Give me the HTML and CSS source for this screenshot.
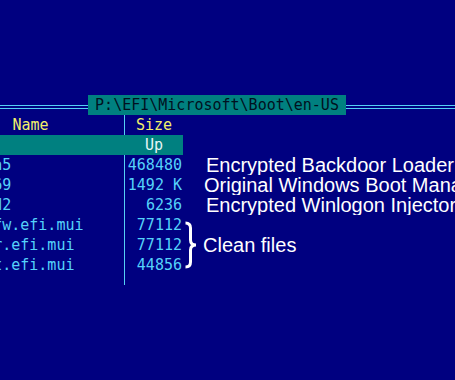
FILE: index.html
```html
<!DOCTYPE html>
<html lang="en">
  <head>
    <meta charset="UTF-8" />
    <title>Far Manager - EFI Boot</title>
    <link rel="stylesheet" href="styles.css">
  </head>
  <body>
    <div class="screen">
      <!-- panel title with double frame line -->
      <div class="titlebar">
        <div class="frame left"></div>
        <div class="path">P:\EFI\Microsoft\Boot\en-US</div>
        <div class="frame right"></div>
      </div>

      <div class="panel">
        <div class="name head">Name</div>
        <div class="size head">Size</div>
        <div class="note"></div>

        <div class="name hl"></div>
        <div class="size hl up">Up</div>
        <div class="note"></div>

        <div class="name">3f1c07a5</div>
        <div class="size">468480</div>
        <div class="note">Encrypted Backdoor Loader</div>

        <div class="name">8e4b2d69</div>
        <div class="size">1492 K</div>
        <div class="note orig">Original Windows Boot Manager</div>

        <div class="name">c05a91d2</div>
        <div class="size">6236</div>
        <div class="note">Encrypted Winlogon Injector</div>

        <div class="name">bootmgfw.efi.mui</div>
        <div class="size">77112</div>
        <div class="note clean">
          <svg class="brace" width="16" height="48" viewBox="0 0 16 48">
            <path d="M1.5 2 Q6.5 2 6.5 7 L6.5 19 Q6.5 24 12 24 Q6.5 24 6.5 29 L6.5 41 Q6.5 46 1.5 46"
                  fill="none" stroke="#fff" stroke-width="3" />
          </svg>
          <span>Clean files</span>
        </div>

        <div class="name">bootmgr.efi.mui</div>
        <div class="size">77112</div>

        <div class="name">memtest.efi.mui</div>
        <div class="size">44856</div>

        <div class="name tail"></div>
        <div class="size tail"></div>
      </div>
    </div>
  </body>
</html>
```

FILE: styles.css
```css
body {
  margin: 0;
  background-color: #000080;
  overflow: hidden;
  height: 380px;
}
.screen {
  padding-top: 95px;
  font-family: "DejaVu Sans Mono", "Liberation Mono", monospace;
  font-size: 15px;
}
.titlebar {
  display: flex;
  align-items: center;
  height: 20px;
}
.frame {
  height: 2px;
  border-top: 1px solid #55d0f5;
  border-bottom: 1px solid #55d0f5;
  margin-top: 3px;
}
.frame.left {
  width: 88px;
}
.frame.right {
  flex: 1;
}
.path {
  width: 258px;
  height: 20px;
  line-height: 20px;
  background-color: #008080;
  color: #001020;
  text-align: center;
}
.panel {
  display: grid;
  grid-template-columns: 188px 58px 300px;
  grid-template-rows: repeat(8, 20px) 10px;
  margin-left: -63px;
  line-height: 20px;
  color: #55d2fa;
}
.name {
  grid-column: 1;
  padding-left: 2px;
  border-right: 1px solid #55d0f5;
  white-space: nowrap;
}
.size {
  grid-column: 2;
  text-align: right;
  padding-right: 1px;
  white-space: nowrap;
}
.head {
  color: #f2f06a;
  text-align: center;
  padding: 0;
}
.hl {
  background-color: #008080;
}
.name.hl {
  border-right-color: #008080;
}
.up {
  text-align: center;
  color: #e6f6f6;
  padding: 0;
}
.note {
  grid-column: 3;
  padding-left: 23px;
  font-family: "Liberation Sans", Arial, sans-serif;
  font-size: 20px;
  color: #fff;
  white-space: nowrap;
  overflow: hidden;
}
.note.orig {
  padding-left: 21px;
}
.note.clean {
  grid-row: span 3;
  display: flex;
  align-items: center;
  gap: 3px;
  padding-left: 1px;
}
.brace {
  display: block;
}
```
